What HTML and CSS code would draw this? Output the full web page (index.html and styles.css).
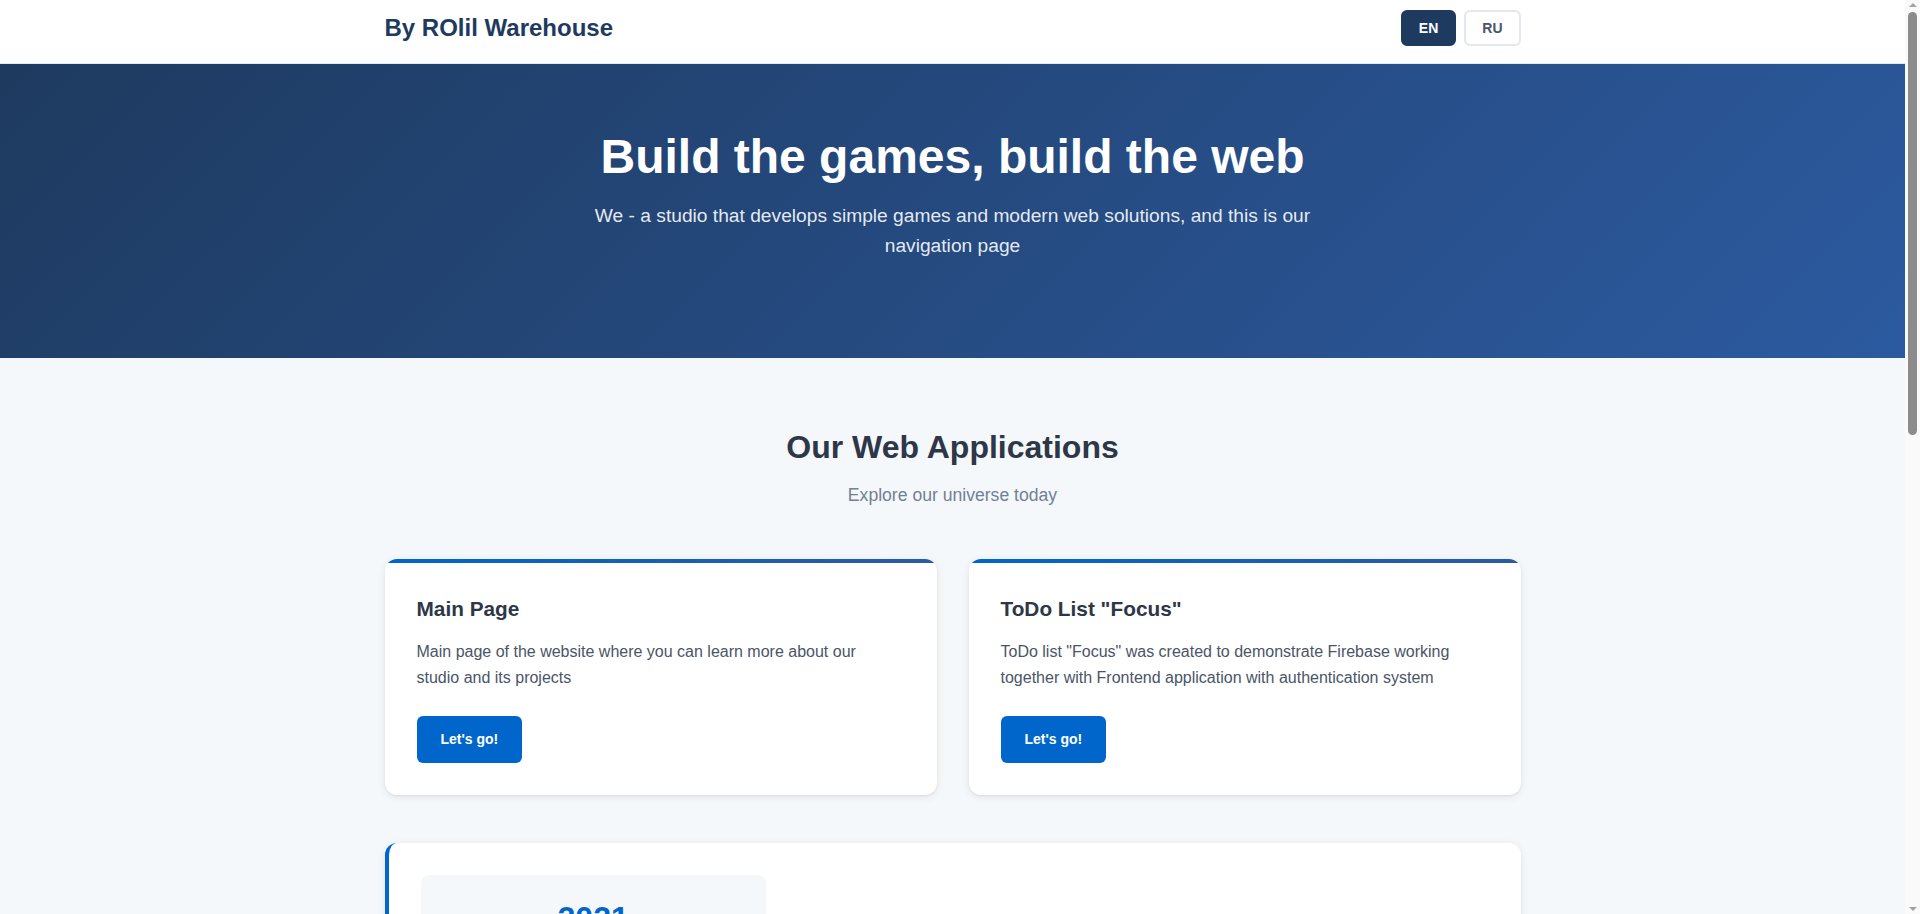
FILE: index.html
```html
<!DOCTYPE html>
<html lang="en">
<head>
<meta charset="UTF-8">
<title>By ROlil Warehouse</title>
<link rel="stylesheet" href="styles.css">
</head>
<body>
<header class="site-header">
  <div class="container header-inner">
    <div class="logo">By ROlil Warehouse</div>
    <div class="lang-switch">
      <button class="lang-btn active">EN</button>
      <button class="lang-btn">RU</button>
    </div>
  </div>
</header>

<section class="hero">
  <div class="container hero-inner">
    <h1 class="hero-title">Build the games, build the web</h1>
    <p class="hero-text">We - a studio that develops simple games and modern web solutions, and this is our navigation page</p>
  </div>
</section>

<main class="section">
  <div class="container">
    <h2 class="section-title">Our Web Applications</h2>
    <p class="section-subtitle">Explore our universe today</p>

    <div class="cards">
      <article class="card">
        <h3 class="card-title">Main Page</h3>
        <p class="card-text">Main page of the website where you can learn more about our studio and its projects</p>
        <a class="btn" href="#">Let's go!</a>
      </article>
      <article class="card">
        <h3 class="card-title">ToDo List "Focus"</h3>
        <p class="card-text">ToDo list "Focus" was created to demonstrate Firebase working together with Frontend application with authentication system</p>
        <a class="btn" href="#">Let's go!</a>
      </article>
    </div>

    <div class="about">
      <div class="stats">
        <div class="stat">
          <div class="stat-value">2021</div>
          <div class="stat-label">Studio founded</div>
        </div>
        <div class="stat">
          <div class="stat-value">10+</div>
          <div class="stat-label">Projects released</div>
        </div>
        <div class="stat">
          <div class="stat-value">2</div>
          <div class="stat-label">Web applications</div>
        </div>
      </div>
      <div class="about-text">
        <h3 class="about-title">About the studio</h3>
        <p>ROlil Warehouse is a small independent studio. We create simple games and modern web solutions, experimenting with new technologies along the way.</p>
      </div>
    </div>
  </div>
</main>

<section class="section section-alt">
  <div class="container">
    <h2 class="section-title">Our Games</h2>
    <p class="section-subtitle">Play something simple</p>
    <div class="cards">
      <article class="card">
        <h3 class="card-title">Coming soon</h3>
        <p class="card-text">Our games will be available here very soon, stay tuned for updates</p>
        <a class="btn" href="#">Let's go!</a>
      </article>
      <article class="card">
        <h3 class="card-title">Coming soon</h3>
        <p class="card-text">Our games will be available here very soon, stay tuned for updates</p>
        <a class="btn" href="#">Let's go!</a>
      </article>
    </div>
  </div>
</section>

<footer class="site-footer">
  <div class="container">© 2025 By ROlil Warehouse</div>
</footer>

<div class="fake-scrollbar" aria-hidden="true">
  <span class="sb-arrow sb-up"></span>
  <span class="sb-thumb"></span>
  <span class="sb-arrow sb-down"></span>
</div>
</body>
</html>
```

FILE: styles.css
```css
* {
  box-sizing: border-box;
}

html, body {
  margin: 0;
  padding: 0;
}

body {
  font-family: "Liberation Sans", Arial, sans-serif;
  line-height: 1.6;
  color: #2d3748;
  background: #f5f8fb;
  margin-right: 15px;
}

/* Scrollbar imitation (browser chrome in the reference) */
.fake-scrollbar {
  position: fixed;
  top: 0;
  right: 0;
  width: 15px;
  height: 100vh;
  background: #fafafa;
  display: flex;
  flex-direction: column;
  align-items: center;
  justify-content: space-between;
  padding: 3px 0;
}

.sb-arrow {
  width: 0;
  height: 0;
  border-left: 4px solid transparent;
  border-right: 4px solid transparent;
}

.sb-up {
  border-bottom: 4px solid #a3a3a3;
}

.sb-down {
  border-top: 4px solid #a3a3a3;
}

.sb-thumb {
  width: 9px;
  height: 423px;
  margin-top: 5px;
  margin-bottom: auto;
  background: #8c8c8c;
  border-radius: 5px;
}

.container {
  max-width: 1200px;
  margin: 0 auto;
  padding: 0 32px;
}

/* Header */
.site-header {
  background: #ffffff;
  border-bottom: 1px solid #e2e8f0;
}

.header-inner {
  display: flex;
  align-items: center;
  justify-content: space-between;
  padding-top: 10px;
  padding-bottom: 17px;
}

.logo {
  font-size: 24px;
  font-weight: 700;
  color: #1e3a5f;
  line-height: 36px;
}

.lang-switch {
  display: flex;
  gap: 8px;
}

.lang-btn {
  font-family: inherit;
  font-size: 14px;
  font-weight: 700;
  line-height: 16px;
  padding: 8px 16px;
  border: 2px solid #e2e8f0;
  border-radius: 6px;
  background: #ffffff;
  color: #4a5568;
  cursor: pointer;
}

.lang-btn.active {
  background: #1e3a5f;
  border-color: #1e3a5f;
  color: #ffffff;
}

/* Hero */
.hero {
  background: linear-gradient(135deg, #1e3a5f 0%, #2c5aa0 100%);
  color: #ffffff;
  text-align: center;
  padding: 64px 0;
}

.hero-title {
  font-size: 48px;
  font-weight: 700;
  line-height: 1.2;
  margin: 0 0 15px;
}

.hero-text {
  font-size: 19.2px;
  line-height: 1.6;
  color: rgba(255, 255, 255, 0.9);
  max-width: 760px;
  margin: 0 auto 32px;
}

/* Sections */
.section {
  padding: 64px 0;
}

.section-alt {
  background: #ffffff;
}

.section-title {
  text-align: center;
  font-size: 32px;
  font-weight: 700;
  color: #2d3748;
  margin: 0 0 8px;
}

.section-subtitle {
  text-align: center;
  font-size: 17.6px;
  color: #718096;
  margin: 0 0 50px;
}

.cards {
  display: grid;
  grid-template-columns: 1fr 1fr;
  gap: 32px;
}

.card {
  background: linear-gradient(90deg, #0066cc, #2c5aa0) top / 100% 4px no-repeat, #ffffff;
  border-radius: 12px;
  padding: 36px 34px 32px 32px;
  box-shadow: 0 2px 8px rgba(0, 0, 0, 0.08), 0 1px 2px rgba(0, 0, 0, 0.06);
}

.card-title {
  font-size: 20.8px;
  font-weight: 700;
  line-height: 1.3;
  color: #2d3748;
  margin: 0 0 17px;
}

.card-text {
  font-size: 16px;
  line-height: 1.6;
  color: #4a5568;
  margin: 0 0 25px;
}

.btn {
  display: inline-block;
  background: #0066cc;
  color: #ffffff;
  font-size: 14px;
  font-weight: 700;
  line-height: 23px;
  padding: 12px 24px;
  border-radius: 6px;
  text-decoration: none;
}

/* About */
.about {
  margin-top: 48px;
  background: #ffffff;
  border-left: 4px solid #0066cc;
  border-radius: 12px;
  padding: 32px;
  box-shadow: 0 2px 8px rgba(0, 0, 0, 0.08), 0 1px 2px rgba(0, 0, 0, 0.06);
  display: grid;
  grid-template-columns: 1fr 2fr;
  gap: 32px;
  align-items: center;
}

.stats {
  display: flex;
  flex-direction: column;
  gap: 16px;
}

.stat {
  background: #f5f8fb;
  border-radius: 8px;
  padding: 24px;
  text-align: center;
}

.stat-value {
  font-size: 32px;
  font-weight: 700;
  line-height: 1.2;
  color: #0066cc;
}

.stat-label {
  font-size: 15px;
  color: #718096;
}

.about-title {
  font-size: 24px;
  margin: 0 0 12px;
  color: #1e3a5f;
}

.about-text p {
  margin: 0;
  color: #4a5568;
}

/* Footer */
.site-footer {
  background: #1e3a5f;
  color: rgba(255, 255, 255, 0.8);
  text-align: center;
  padding: 28px 0;
  font-size: 14px;
}
```
